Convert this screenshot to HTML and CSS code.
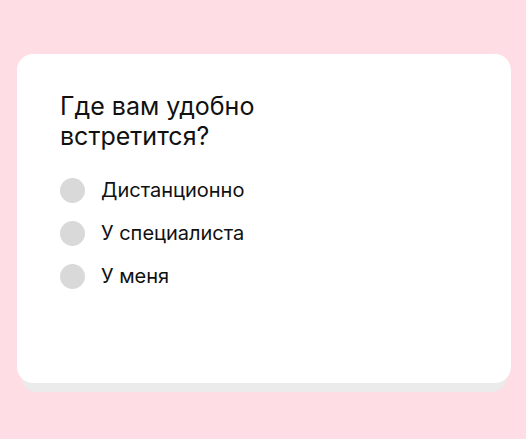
FILE: index.html
```html
<!DOCTYPE html>
<html lang="ru">
<head>
<meta charset="utf-8">
<link rel="stylesheet" href="styles.css">
</head>
<body>
<div class="stage">
  <div class="card-wrap">
    <div class="card">
      <h1 class="title">Где вам удобно<br>встретится?</h1>
      <ul class="options">
        <li class="option"><span class="radio"></span><span class="label">Дистанционно</span></li>
        <li class="option"><span class="radio"></span><span class="label">У специалиста</span></li>
        <li class="option"><span class="radio"></span><span class="label">У меня</span></li>
      </ul>
    </div>
    <div class="card-shadow"></div>
  </div>
</div>
</body>
</html>
```
FILE: styles.css
```css
* { box-sizing: border-box; }
html, body {
  margin: 0;
  padding: 0;
  background: #fedde4;
  font-family: "Inter", "Roboto", sans-serif;
  color: #111;
}
.stage {
  width: 526px;
  height: 439px;
  padding: 54px 15px 0 17px;
}
.card-wrap {
  display: flex;
  flex-direction: column;
  align-items: center;
}
.card {
  width: 494px;
  height: 329px;
  background: #fff;
  border-radius: 16px;
  padding: 37px 43px 0 43px;
  position: relative;
  z-index: 1;
}
.card-shadow {
  width: 484px;
  height: 25px;
  margin-top: -16px;
  background: #ebebeb;
  border-radius: 0 0 14px 14px;
}
.title {
  margin: 0;
  font-size: 25px;
  font-weight: 400;
  line-height: 30px;
  letter-spacing: 0;
}
.options {
  list-style: none;
  margin: 27px 0 0 0;
  padding: 0;
  display: flex;
  flex-direction: column;
  gap: 18px;
}
.option {
  display: flex;
  align-items: center;
  gap: 16px;
  height: 25px;
}
.radio {
  width: 25px;
  height: 25px;
  border-radius: 50%;
  background: #d9d9d9;
  flex: none;
}
.label {
  font-size: 20px;
  line-height: 25px;
}
```
